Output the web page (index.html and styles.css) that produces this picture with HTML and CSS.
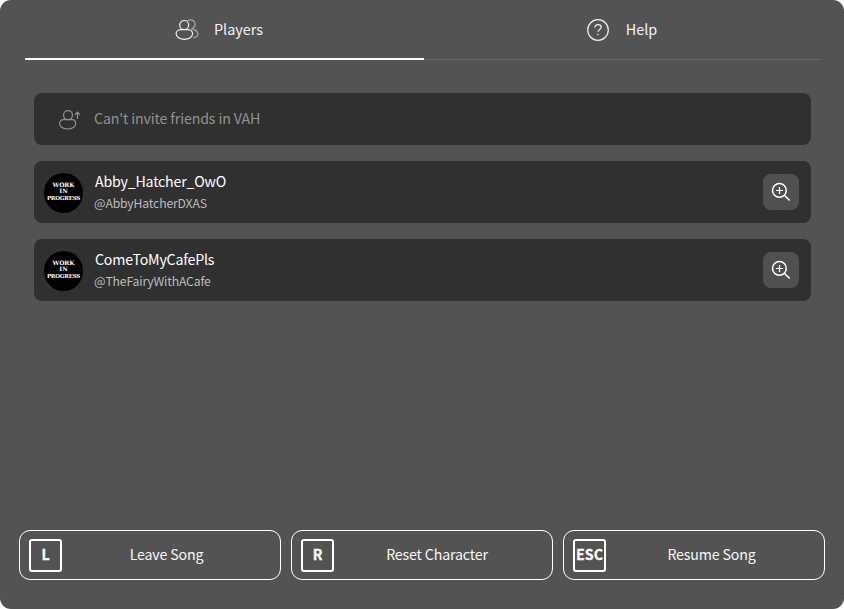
FILE: index.html
```html
<!DOCTYPE html>
<html lang="en">
<head>
<meta charset="utf-8">
<title>Game Menu</title>
<link rel="stylesheet" href="styles.css">
</head>
<body>
<svg class="defs" width="0" height="0" aria-hidden="true">
  <symbol id="zoom-in" viewBox="0 0 20 20">
    <circle cx="8.400" cy="8.400" r="6.900" stroke-width="1.5"/>
    <path d="M8.500 5v7M5 8.500h7" stroke-width="1.2"/>
    <path d="M13.300 13.300l5.400 5.200" stroke-width="1.500"/>
  </symbol>
</svg>
<main class="menu">
  <nav class="tabs">
    <a class="tab tab-active">
      <svg class="icon icon-players" viewBox="0 0 24 22">
        <g class="faded"><path d="M12.300 2.300A4.500 4.500 0 1 1 16.300 9.800"/><path d="M17.500 10.300c3.200.3 5.400 2.700 5.400 5 0 1.800-1.800 3.100-4.900 3.400"/></g>
        <circle cx="9.200" cy="6" r="4.500"/>
        <path d="M5.500 10.700h7.500c3 0 4.600 2.200 4.600 4.100 0 3.100-3.700 5.500-8.200 5.500S1.100 17.900 1.100 14.800c0-1.900 1.500-4.100 4.400-4.100z"/>
      </svg>
      <span>Players</span>
    </a>
    <a class="tab tab-help">
      <svg class="icon icon-help" viewBox="0 0 22 22">
        <circle cx="11" cy="11" r="10.300"/>
        <path d="M7.900 8.400c0-1.700 1.300-2.700 3.100-2.700s3.200 1 3.200 2.600c0 2.200-3.200 2-3.200 4.500"/><path d="M11 14.800v1.500"/>
      </svg>
      <span>Help</span>
    </a>
  </nav>
  <section class="list">
    <div class="invite">
      <svg class="icon icon-invite" viewBox="0 0 24 22">
        <circle cx="10" cy="6.100" r="4.500"/>
        <path d="M5.500 10.600h8.500c2.400 0 3.700 2 3.700 3.900 0 3.200-3.600 5.500-8.100 5.500s-8-2.300-8-5.500c0-1.900 1.400-3.900 3.900-3.900zM19.500 9.900V3.600M16.900 5.800l2.600-2.600 2.600 2.600"/>
      </svg>
      <span>Can't invite friends in VAH</span>
    </div>
    <div class="player">
      <div class="avatar"><span class="word-work">WORK</span><span class="word-in">IN</span><span class="word-progress">PROGRESS</span></div>
      <div class="who"><div class="name">Abby_Hatcher_OwO</div><div class="handle">@AbbyHatcherDXAS</div></div>
      <button class="inspect" aria-label="Inspect"><svg><use href="#zoom-in"/></svg></button>
    </div>
    <div class="player">
      <div class="avatar"><span class="word-work">WORK</span><span class="word-in">IN</span><span class="word-progress">PROGRESS</span></div>
      <div class="who"><div class="name">ComeToMyCafePls</div><div class="handle">@TheFairyWithACafe</div></div>
      <button class="inspect" aria-label="Inspect"><svg><use href="#zoom-in"/></svg></button>
    </div>
  </section>
  <footer class="actions">
    <button class="action"><kbd>L</kbd><span>Leave Song</span></button>
    <button class="action action-reset"><kbd>R</kbd><span>Reset Character</span></button>
    <button class="action action-resume"><kbd>ESC</kbd><span>Resume Song</span></button>
  </footer>
</main>
</body>
</html>
```
FILE: styles.css
```css
* { box-sizing: border-box; }
body { margin: 0; background: #fff; color: #fff; }
body, button, kbd { font-family: "Noto Sans CJK SC", "Noto Sans", sans-serif; }
.defs { display: block; height: 0; }
.menu {
  width: 844px; height: 609px; padding: 0 19px 29px;
  display: flex; flex-direction: column;
  background: #535353; border-radius: 11px;
}
.tabs { display: grid; grid-template-columns: 399px 1fr; height: 60px; margin: 0 3px 0 6px; }
.tab {
  display: flex; justify-content: center; align-items: center;
  font-size: 14.4px; line-height: 20px; color: #f4f4f4;
  border-bottom: 1px solid #666;
}
.tab span { padding-bottom: 2px; }
.tab-active { border-bottom: 2px solid #fff; padding: 2px 11px 0 0; }
.tab-help { padding-right: 2px; }
.icon { fill: none; stroke: #f0f0f0; stroke-width: 1.2; flex: none; }
.icon-players { width: 24px; height: 22px; margin-right: 15px; }
.icon-help { width: 22px; height: 22px; margin-right: 17px; }
.faded { stroke: #aaa; }
.list { display: flex; flex-direction: column; gap: 16px; margin: 33px 14px 0 15px; }
.invite, .player { display: flex; align-items: center; background: #303030; border-radius: 8px; }
.invite { height: 52px; padding-left: 24px; font-size: 14.2px; letter-spacing: -.14px; line-height: 20px; color: #929292; }
.invite span { padding-bottom: 2px; }
.icon-invite { width: 24px; height: 22px; margin: 1px 12px 0 0; stroke: #929292; }
.player { height: 62px; padding: 0 12px 0 10px; }
.avatar {
  width: 39px; height: 40px; margin-top: 2px; border-radius: 50%; background: #000; color: #fff;
  display: flex; flex-direction: column; align-items: center; justify-content: center;
  font: bold 6px/6.500px "DejaVu Serif", serif; padding-bottom: 3px; white-space: nowrap;
}
.word-work { font-size: 6px; }
.word-progress { font-size: 5.500px; letter-spacing: -.2px; }
.who { flex: 1; margin: 1px 0 0 12px; }
.name { font-size: 14.2px; letter-spacing: -.2px; line-height: 21px; }
.handle { font-size: 12.2px; letter-spacing: -.15px; line-height: 21px; color: #bdbdbd; margin: 1px 0 0 -1px; }
.inspect {
  width: 36px; height: 36px; padding: 0; border: 0; border-radius: 8px; background: #505050;
  display: grid; place-items: center;
}
.inspect svg { width: 20px; height: 20px; fill: none; stroke: #fff; }
.actions { display: flex; gap: 10px; margin-top: auto; }
.action {
  flex: 1; height: 50px; padding: 0 9px; display: flex; align-items: center;
  background: none; border: 1px solid #fff; border-radius: 11px;
  color: #f8f8f8; font-size: 14.2px; letter-spacing: -.15px; line-height: 20px;
}
.action span { flex: 1; text-align: center; padding-bottom: 2px; }
.action-reset span { padding-right: 3px; }
.action-resume span { padding-left: 2px; }
kbd {
  width: 33px; height: 33px; border: 2px solid #fff; border-radius: 3px;
  display: flex; align-items: center; justify-content: center;
  padding-bottom: 2px; font-size: 14.2px; font-weight: 700; letter-spacing: 0;
  -webkit-text-stroke: .3px #fff;
}
```
